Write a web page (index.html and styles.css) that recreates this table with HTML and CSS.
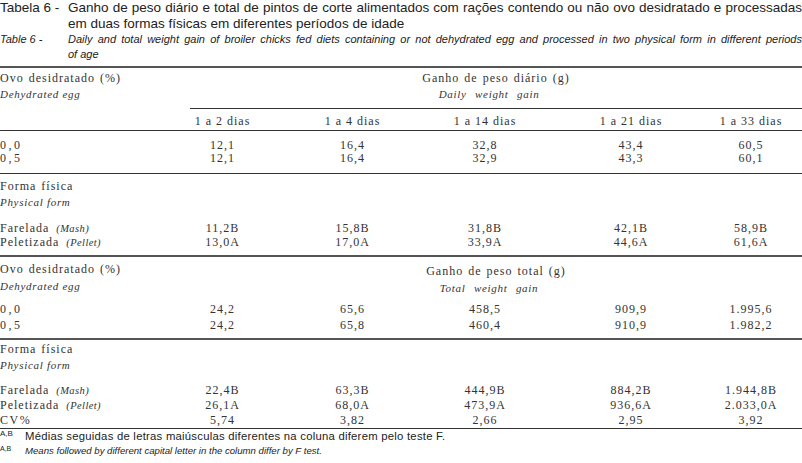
FILE: index.html
```html
<!DOCTYPE html>
<html lang="pt">
<head>
<meta charset="utf-8">
<title>Tabela 6</title>
<link rel="stylesheet" href="styles.css">
</head>
<body>
<div class="page">
  <div class="cap cap-pt">
    <div class="cap-label">Tabela 6 -</div>
    <div class="cap-text">
      <div class="cap-first">Ganho de peso diário e total de pintos de corte alimentados com rações contendo ou não ovo desidratado e processadas</div>
      <div>em duas formas físicas em diferentes períodos de idade</div>
    </div>
  </div>
  <div class="cap cap-en">
    <div class="cap-label">Table 6 -</div>
    <div class="cap-text">
      <div class="cap-first">Daily and total weight gain of broiler chicks fed diets containing or not dehydrated egg and processed in two physical form in different periods</div>
      <div>of age</div>
    </div>
  </div>

  <div class="tbl">
    <div class="ghead">
      <div class="glabel">
        <div class="pt l16">Ovo desidratado (%)</div>
        <div class="en l17">Dehydrated egg</div>
      </div>
      <div class="gtitle ruled">
        <div class="pt l16">Ganho de peso diário (g)</div>
        <div class="en l17 wide">Daily weight gain</div>
      </div>
    </div>

    <div class="row colhead">
      <div></div>
      <div class="c">1 a 2 dias</div>
      <div class="c">1 a 4 dias</div>
      <div class="c">1 a 14 dias</div>
      <div class="c">1 a 21 dias</div>
      <div class="c">1 a 33 dias</div>
    </div>

    <div class="sec s1">
      <div class="row l13"><div class="lab">0,0</div><div class="c">12,1</div><div class="c">16,4</div><div class="c">32,8</div><div class="c">43,4</div><div class="c">60,5</div></div>
      <div class="row l13"><div class="lab">0,5</div><div class="c">12,1</div><div class="c">16,4</div><div class="c">32,9</div><div class="c">43,3</div><div class="c">60,1</div></div>
    </div>

    <div class="sec s2">
      <div class="pt l16">Forma física</div>
      <div class="en l17">Physical form</div>
      <div class="gap10"></div>
      <div class="row l14"><div>Farelada <i class="tag">(Mash)</i></div><div class="c">11,2B</div><div class="c">15,8B</div><div class="c">31,8B</div><div class="c">42,1B</div><div class="c">58,9B</div></div>
      <div class="row l14"><div>Peletizada <i class="tag">(Pellet)</i></div><div class="c">13,0A</div><div class="c">17,0A</div><div class="c">33,9A</div><div class="c">44,6A</div><div class="c">61,6A</div></div>
    </div>

    <div class="sec s3">
      <div class="ghead2">
        <div class="glabel">
          <div class="pt l16">Ovo desidratado (%)</div>
          <div class="en l18">Dehydrated egg</div>
        </div>
        <div class="gtitle">
          <div class="pt l16">Ganho de peso total (g)</div>
          <div class="en l18 wide">Total weight gain</div>
        </div>
      </div>
      <div class="gap4"></div>
      <div class="row l16"><div class="lab">0,0</div><div class="c">24,2</div><div class="c">65,6</div><div class="c">458,5</div><div class="c">909,9</div><div class="c">1.995,6</div></div>
      <div class="row l16"><div class="lab">0,5</div><div class="c">24,2</div><div class="c">65,8</div><div class="c">460,4</div><div class="c">910,9</div><div class="c">1.982,2</div></div>
    </div>

    <div class="sec s4">
      <div class="pt l16">Forma física</div>
      <div class="en l16">Physical form</div>
      <div class="gap10"></div>
      <div class="row l15"><div>Farelada <i class="tag">(Mash)</i></div><div class="c">22,4B</div><div class="c">63,3B</div><div class="c">444,9B</div><div class="c">884,2B</div><div class="c">1.944,8B</div></div>
      <div class="row l15"><div>Peletizada <i class="tag">(Pellet)</i></div><div class="c">26,1A</div><div class="c">68,0A</div><div class="c">473,9A</div><div class="c">936,6A</div><div class="c">2.033,0A</div></div>
      <div class="row l15"><div class="lab2">CV%</div><div class="c">5,74</div><div class="c">3,82</div><div class="c">2,66</div><div class="c">2,95</div><div class="c">3,92</div></div>
    </div>
  </div>

  <div class="foot">
    <div class="fn fn-pt"><sup class="mark">A,B</sup><span>Médias seguidas de letras maiúsculas diferentes na coluna diferem pelo teste F.</span></div>
    <div class="fn fn-en"><sup class="mark">A,B</sup><span>Means followed by different capital letter in the column differ by F test.</span></div>
  </div>
</div>
</body>
</html>
```

FILE: styles.css
```css
html, body {
  margin: 0;
  padding: 0;
  background: #ffffff;
}

.page {
  width: 802px;
  color: #222222;
  overflow: hidden;
}

/* caption */
.cap {
  display: flex;
  font-family: "Liberation Sans", Arial, sans-serif;
}
.cap-label {
  width: 68px;
  flex: none;
  white-space: nowrap;
}
.cap-text {
  flex: 1;
  min-width: 0;
}
.cap-first {
  white-space: nowrap;
  text-align: justify;
  text-align-last: justify;
}
.cap-pt {
  font-size: 13.5px;
  line-height: 16px;
}
.cap-en {
  font-size: 11px;
  line-height: 15px;
  font-style: italic;
}

/* table */
.tbl {
  margin-top: 4px;
  border-top: 2px solid #555555;
  border-bottom: 1px solid #333333;
  font-family: "Liberation Serif", "Times New Roman", serif;
  font-size: 12px;
  letter-spacing: 1px;
  color: #333333;
}

.pt {
  font-size: 12px;
  letter-spacing: 1px;
  word-spacing: 1px;
}
.en {
  font-size: 11px;
  font-style: italic;
  letter-spacing: 0.7px;
}
.en.wide {
  word-spacing: 5px;
}
.gtitle .en {
  padding-right: 14px;
}

.l13 { line-height: 13px; }
.l14 { line-height: 14px; }
.l15 { line-height: 15px; }
.l16 { line-height: 16px; }
.l17 { line-height: 17px; }
.l18 { line-height: 18px; }

.gap4 { height: 4px; }
.gap10 { height: 10px; }

.ghead {
  display: grid;
  grid-template-columns: 190px 1fr;
  height: 41px;
}
.ghead .glabel {
  padding-top: 2px;
}
.gtitle {
  text-align: center;
  padding-top: 2px;
  box-sizing: border-box;
}
.gtitle.ruled {
  border-bottom: 1px solid #333333;
}
.ghead2 {
  display: grid;
  grid-template-columns: 190px 1fr;
}

.row {
  display: grid;
  grid-template-columns: 160px 125px 135px 130px 162px 78px;
  padding-right: 12px;
  white-space: nowrap;
}
.c {
  text-align: center;
}
.lab {
  letter-spacing: 2.5px;
}
.lab2 {
  letter-spacing: 1.5px;
}

.colhead {
  height: 22px;
  box-sizing: border-box;
  padding-top: 3px;
  line-height: 18px;
  border-bottom: 1px solid #333333;
}

.tag {
  font-size: 10.5px;
  letter-spacing: 0.4px;
  margin-left: 3px;
  line-height: 0;
}

.sec {
  box-sizing: border-box;
}
.s1 {
  padding: 8px 0 8px;
  border-bottom: 1px solid #333333;
}
.s2 {
  padding: 4px 0 6px;
  border-bottom: 2px solid #555555;
}
.s3 {
  padding: 4px 0 5px;
  border-bottom: 2px solid #555555;
}
.s4 {
  padding: 1px 0 0;
}

/* footnotes */
.foot {
  font-family: "Liberation Sans", Arial, sans-serif;
  color: #222222;
}
.fn {
  display: flex;
  align-items: baseline;
  white-space: nowrap;
}
.mark {
  width: 25px;
  flex: none;
  font-size: 8px;
  letter-spacing: 0;
  vertical-align: baseline;
  position: relative;
  top: -4px;
  line-height: 0;
}
.fn-pt {
  font-size: 11.3px;
  line-height: 14px;
  letter-spacing: 0.25px;
}
.fn-en {
  font-size: 9.6px;
  line-height: 15px;
  font-style: italic;
  letter-spacing: 0px;
}
.fn-en .mark {
  font-style: normal;
  font-size: 7px;
  top: -3px;
}
```
